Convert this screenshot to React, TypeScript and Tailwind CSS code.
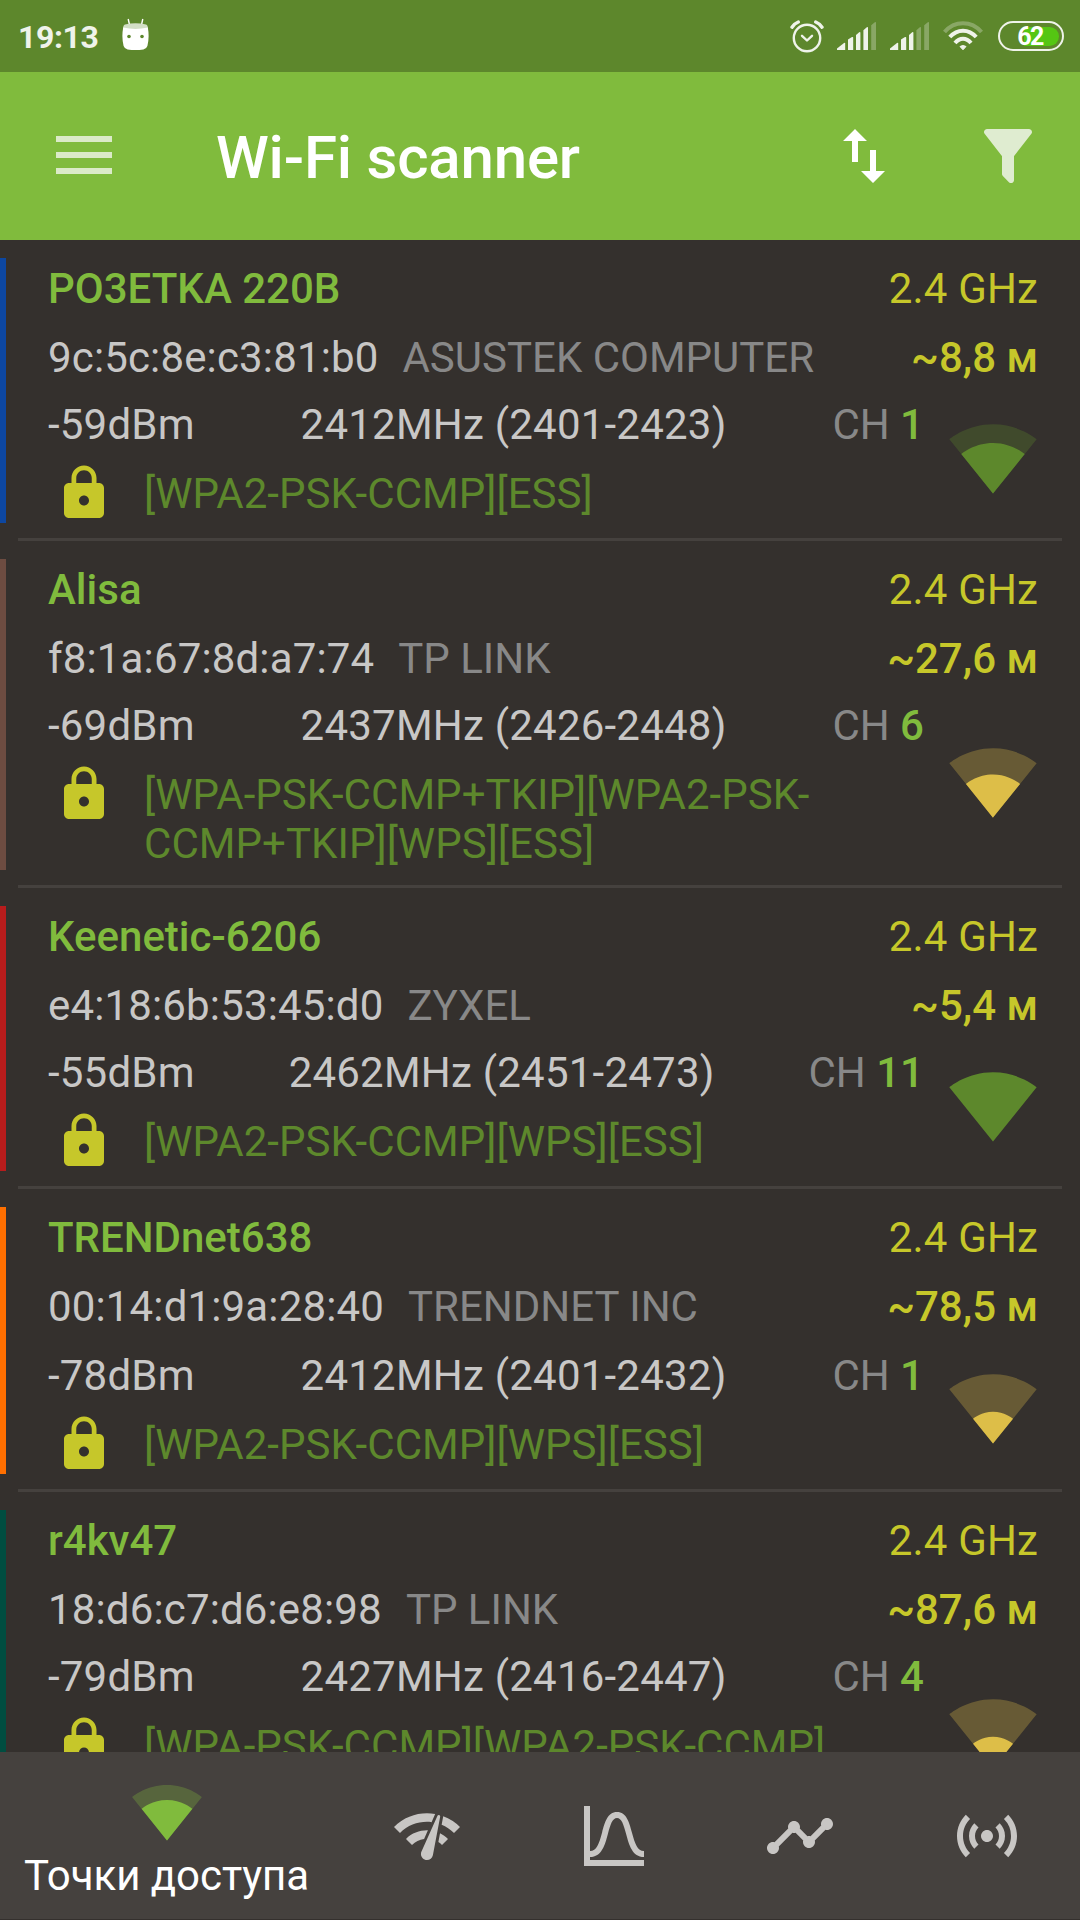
import React from 'react';
import { MdLock, MdNetworkCheck, MdSensors, MdSwapVert, MdTimeline } from 'react-icons/md';

interface Network {
  ssid: string;
  mac: string;
  vendor: string;
  distance: string;
  level: string;
  frequency: string;
  channel: number;
  security: string;
  bars: 1 | 2 | 3 | 4;
  border: string;
  signal: string;
  gap?: string;
}

const networks: Network[] = [
  {
    ssid: 'PO3ETKA 220B',
    mac: '9c:5c:8e:c3:81:b0',
    vendor: 'ASUSTEK COMPUTER',
    distance: '~8,8 м',
    level: '-59dBm',
    frequency: '2412MHz (2401-2423)',
    channel: 1,
    security: '[WPA2-PSK-CCMP][ESS]',
    bars: 3,
    border: 'border-[#0d47a1]',
    signal: 'text-[#5d882c]',
  },
  {
    ssid: 'Alisa',
    mac: 'f8:1a:67:8d:a7:74',
    vendor: 'TP LINK',
    distance: '~27,6 м',
    level: '-69dBm',
    frequency: '2437MHz (2426-2448)',
    channel: 6,
    security: '[WPA-PSK-CCMP+TKIP][WPA2-PSK-CCMP+TKIP][WPS][ESS]',
    bars: 2,
    border: 'border-[#6d4c41]',
    signal: 'text-[#ddbe48]',
  },
  {
    ssid: 'Keenetic-6206',
    mac: 'e4:18:6b:53:45:d0',
    vendor: 'ZYXEL',
    distance: '~5,4 м',
    level: '-55dBm',
    frequency: '2462MHz (2451-2473)',
    channel: 11,
    security: '[WPA2-PSK-CCMP][WPS][ESS]',
    bars: 4,
    border: 'border-[#b71c1c]',
    signal: 'text-[#5d882c]',
  },
  {
    ssid: 'TRENDnet638',
    mac: '00:14:d1:9a:28:40',
    vendor: 'TRENDNET INC',
    distance: '~78,5 м',
    level: '-78dBm',
    frequency: '2412MHz (2401-2432)',
    channel: 1,
    security: '[WPA2-PSK-CCMP][WPS][ESS]',
    bars: 1,
    border: 'border-[#ff6f00]',
    signal: 'text-[#ddbe48]',
    gap: 'pt-5',
  },
  {
    ssid: 'r4kv47',
    mac: '18:d6:c7:d6:e8:98',
    vendor: 'TP LINK',
    distance: '~87,6 м',
    level: '-79dBm',
    frequency: '2427MHz (2416-2447)',
    channel: 4,
    security: '[WPA-PSK-CCMP][WPA2-PSK-CCMP][WPS][ESS]',
    bars: 1,
    border: 'border-[#004d40]',
    signal: 'text-[#ddbe48]',
  },
];

const FULL_FAN =
  'M12.01 21.49L23.64 7c-.45-.34-4.93-4-11.64-4C5.28 3 .81 6.66.36 7l11.63 14.49.01.01.01-.01z';

const FANS = {
  1: 'M6.67 14.86L12 21.49v.01l.01-.01 5.33-6.63C17.06 14.65 15.03 13 12 13s-5.06 1.65-5.33 1.86z',
  2: 'M4.79 12.52l7.2 8.98H12l.01-.01 7.2-8.98C18.85 12.24 16.1 10 12 10s-6.85 2.24-7.21 2.52z',
  3: 'M3.53 10.95l8.46 10.54.01.01.01-.01 8.46-10.54C20.04 10.62 16.81 8 12 8c-4.81 0-8.04 2.62-8.47 2.95z',
  4: FULL_FAN,
};

const SignalFan: React.FC<{ bars: 1 | 2 | 3 | 4; className: string }> = ({ bars, className }) => (
  <svg viewBox="0 0 24 24" fill="currentColor" className={className}>
    {bars < 4 && <path fillOpacity=".3" d={FULL_FAN} />}
    <path d={FANS[bars]} />
  </svg>
);

const CellSignal: React.FC<{ active: number }> = ({ active }) => {
  const bars = [
    'M0 28v-1.5L7 21q1.2-.6 1.2.6V28z',
    'M11 28V17.5l4-2.4q1.2-.5 1.2.6V28z',
    'M19 28V13l3.2-2.8q1.2-.6 1.2.6V28z',
    'M26.4 28V8.3l3.4-3q1.2-.6 1.2.6V28z',
    'M34.2 28V3.3l3.6-3q1.2-.6 1.2.6V28z',
  ];
  return (
    <svg viewBox="0 0 39 28" fill="currentColor" className="h-7 w-[39px]">
      {bars.map((d, i) => (
        <path key={i} d={d} fillOpacity={i < active ? 1 : 0.3} />
      ))}
    </svg>
  );
};

const StatusBar: React.FC = () => (
  <div className="flex h-[72px] shrink-0 items-center bg-[#5d872c] pl-[18px] pr-4 text-[#eff3ea]">
    <span className="w-[104px] pt-[2px] text-[32px] font-bold leading-none tracking-[-0.4px]">19:13</span>
    {/* Android head */}
    <svg viewBox="0 0 27 32" className="mb-1 h-8 w-[27px]">
      <path d="M6.2 1l1.6 7M20.8 1l-1.6 7" stroke="#fff" strokeWidth="1.4" />
      <path d="M3 6.5q10.500-2.500 21 0q2 .7 2 5H1q0-4.300 2-5z" fill="#d3dfc6" />
      <path
        fill="#fff"
        d="M1.200 9.500q12.300 2.800 24.600 0Q27.600 19 25.400 28q-1 3-4 3.400-7.900 1.200-15.800 0-3-.4-4-3.400Q-.6 19 1.200 9.500z"
      />
      <circle cx="7" cy="18.500" r="1.800" fill="#5d872c" />
      <circle cx="20" cy="18.500" r="1.800" fill="#5d872c" />
    </svg>
    <div className="ml-auto flex items-center">
      <svg
        viewBox="0 0 34 34"
        fill="none"
        stroke="currentColor"
        strokeLinecap="round"
        strokeLinejoin="round"
        className="mr-[13px] h-[34px] w-[34px]"
      >
        <circle cx="17" cy="19" r="13.200" strokeWidth="2.400" />
        <path d="M12 16.800l5 4.700 5-4.700" strokeWidth="2.400" />
        <path d="M2 8.200Q4.500 4.500 8.300 3M32 8.200Q29.500 4.500 25.700 3" strokeWidth="3.400" />
      </svg>
      <div className="mr-[14px] flex">
        <CellSignal active={4} />
      </div>
      <div className="mr-[14px] flex">
        <CellSignal active={3} />
      </div>
      <svg
        viewBox="0 0 40 30"
        fill="none"
        stroke="currentColor"
        strokeWidth="4"
        className="mr-[15px] h-[30px] w-10"
      >
        <path d="M1.500 11Q9 2.200 20 2.200T38.500 11" opacity=".3" />
        <path d="M6.800 16Q12.500 9.700 20 9.700T33.200 16" />
        <path d="M12 22Q15.500 17.700 20 17.700T28 22" />
        <path d="M17 25.500Q20 23.500 23 25.500L20 28.800z" strokeWidth="1" fill="currentColor" strokeLinejoin="round" />
      </svg>
      <div className="relative flex h-[30px] w-[66px] items-center justify-center rounded-full border-[2.500px] border-current">
        <div className="absolute bottom-[3.500px] right-[3.500px] top-[3.500px] w-[35px] rounded-r-full bg-[#55c613]" />
        <span className="relative pr-[2px] text-[25px] font-bold leading-none tracking-[-1.500px] text-white">62</span>
      </div>
    </div>
  </div>
);

const AppBar: React.FC = () => (
  <header className="flex h-[168px] shrink-0 items-center bg-[#80bb3d] pl-14 pr-9">
    <div className="flex w-[160px] flex-col gap-[10px] pb-[2px]">
      <span className="h-[6px] w-14 bg-[#dbeac8]" />
      <span className="h-[6px] w-14 bg-[#dbeac8]" />
      <span className="h-[6px] w-14 bg-[#dbeac8]" />
    </div>
    <h1 className="flex-1 pt-1 text-[60px] font-medium leading-[70px] tracking-[-0.2px] text-white">Wi-Fi scanner</h1>
    <MdSwapVert className="mr-[72px] h-[72px] w-[72px] text-white" />
    <svg viewBox="0 0 24 24" fill="#dfecd0" className="h-[72px] w-[72px]">
      <path d="M14,12V19.88C14.04,20.18 13.94,20.5 13.71,20.71C13.32,21.1 12.69,21.1 12.3,20.71L10.29,18.7C10.06,18.47 9.96,18.16 10,17.87V12H9.97L4.21,4.62C3.87,4.19 3.95,3.56 4.38,3.22C4.57,3.08 4.78,3 5,3V3H19V3C19.22,3 19.43,3.08 19.62,3.22C20.05,3.56 20.13,4.19 19.79,4.62L14.03,12H14Z" />
    </svg>
  </header>
);

const NetworkRow: React.FC<{ network: Network }> = ({ network }) => (
  <li>
    <div className="pb-[15px] pt-[18px]">
      <div className={`border-l-[6px] pl-[42px] pr-[42px] pt-[6px] ${network.border}`}>
        <div className="flex justify-between">
          <span className="font-medium text-[#80bb3d]">{network.ssid}</span>
          <span className="tracking-[0.15px] text-[#c6c72a]">2.4 GHz</span>
        </div>
        <div className="mt-5 flex">
          <span className="tracking-[0.15px]">{network.mac}</span>
          <span className="ml-6 text-[#888]">{network.vendor}</span>
          <span className="ml-auto font-medium text-[#c6c72a]">{network.distance}</span>
        </div>
        <div className="flex">
          <div className={`w-[876px] ${network.gap ?? 'pt-[18px]'}`}>
            <div className="flex justify-between">
              <span className="tracking-[0.2px]">{network.level}</span>
              <span className="tracking-[0.22px]">{network.frequency}</span>
              <span className="text-[#888]">
                CH <span className="font-medium text-[#80bb3d]">{network.channel}</span>
              </span>
            </div>
            <div className="mt-[14px] flex items-start pl-[6px]">
              <MdLock className="h-[60px] w-[60px] shrink-0 text-[#c6c72a]" />
              <p className="ml-[30px] pb-[2px] pt-[6px] tracking-[0.05px] text-[#5d882c]">{network.security}</p>
            </div>
          </div>
          <div className="ml-6 flex items-center pt-[11px]">
            <SignalFan bars={network.bars} className={`h-[90px] w-[90px] ${network.signal}`} />
          </div>
        </div>
      </div>
    </div>
    <div className="mx-[18px] h-[3px] bg-[#45413e]" />
  </li>
);

const BottomNav: React.FC = () => (
  <nav className="flex h-[168px] shrink-0 border-b border-[#34302d] bg-[#45413e] text-[#c8c6c4]">
    <button className="flex w-[334px] flex-col items-center pt-6">
      <SignalFan bars={3} className="h-[72px] w-[72px] text-[#80bb3d]" />
      <span className="mt-[3px] whitespace-nowrap pr-px tracking-[-0.05px] text-white">Точки доступа</span>
    </button>
    <button className="flex flex-1 items-center justify-center">
      <MdNetworkCheck className="h-[72px] w-[72px]" />
    </button>
    <button className="flex flex-1 items-center justify-center">
      <svg viewBox="0 0 24 24" fill="currentColor" className="h-[72px] w-[72px]">
        <path d="M9.96,11.31C10.82,8.1 11.5,6 13,6C14.5,6 15.18,8.1 16.04,11.31C17,14.92 18.1,19 22,19V17C19.8,17 19,14.54 17.97,10.8C17.08,7.46 16.15,4 13,4C9.85,4 8.92,7.46 8.03,10.8C7.03,14.54 6.2,17 4,17V2H2V22H22V20H4V19C7.9,19 9,14.92 9.96,11.31Z" />
      </svg>
    </button>
    <button className="flex flex-1 items-center justify-center">
      <MdTimeline className="h-[72px] w-[72px]" />
    </button>
    <button className="flex flex-1 items-center justify-center">
      <MdSensors className="h-[72px] w-[72px]" />
    </button>
  </nav>
);

const App: React.FC = () => (
  <div className="flex h-[1920px] w-[1080px] flex-col overflow-hidden bg-[#34302d] font-['Roboto',sans-serif] text-[42px] leading-[49px] text-[#c8c7c6]">
    <StatusBar />
    <AppBar />
    <ul className="min-h-0 flex-1 overflow-hidden">
      {networks.map((network) => (
        <NetworkRow key={network.mac} network={network} />
      ))}
    </ul>
    <BottomNav />
  </div>
);

export default App;
